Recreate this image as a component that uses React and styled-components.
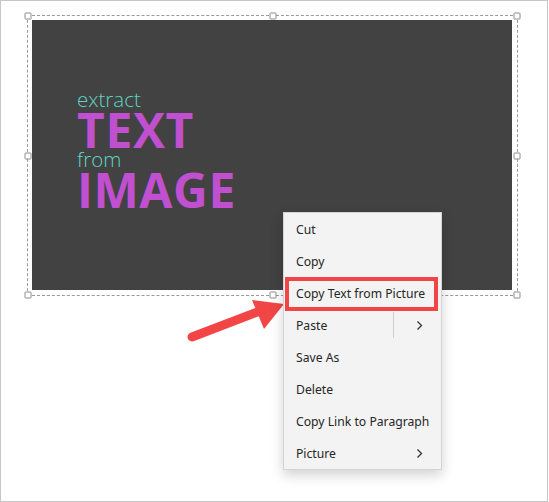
import styled, { createGlobalStyle } from "styled-components";

const GlobalStyle = createGlobalStyle`
    html, body {
        margin: 0;
        padding: 0;
        background: #ffffff;
    }
`;

const RED = "#f24646";

const Frame = styled.div`
    position: relative;
    width: 548px;
    height: 502px;
    box-sizing: border-box;
    border: 1px solid #c6c6c6;
    padding: 14px 0 0 26px;
    background: #ffffff;
`;

const Selection = styled.div`
    position: relative;
    width: 491px;
    height: 281px;
    box-sizing: border-box;
    border: 1px dashed #9a9a9a;
    padding: 4px;
`;

const Handle = styled.span`
    position: absolute;
    width: 5px;
    height: 5px;
    border: 1px solid #8c8c8c;
    border-radius: 1px;
    background: #ffffff;
    left: ${(p) => p.$x};
    top: ${(p) => p.$y};
    transform: translate(-50%, -50%);
`;

const Picture = styled.div`
    width: 480px;
    height: 270px;
    background: #424242;
    box-sizing: border-box;
    padding: 69px 0 0 45px;
    display: flex;
    flex-direction: column;
    align-items: flex-start;
    font-family: "Open Sans", "Noto Sans", sans-serif;
`;

const SmallWord = styled.span`
    font-size: 20.5px;
    font-weight: 300;
    color: #5fd4c4;
    line-height: ${(p) => p.$lh}px;
`;

const BigWord = styled.span`
    font-size: 48px;
    font-weight: 700;
    color: #c050d0;
    line-height: 41px;
    letter-spacing: 0.6px;
`;

const Menu = styled.div`
    position: absolute;
    left: 282px;
    top: 211px;
    width: 159px;
    box-sizing: border-box;
    background: #f3f3f3;
    border: 1px solid #d4d4d4;
    box-shadow: 0 5px 12px rgba(0, 0, 0, 0.18);
    font-family: "Noto Sans", "Open Sans", sans-serif;
    font-size: 12.2px;
    color: #262626;
`;

const Item = styled.div`
    position: relative;
    height: 32px;
    display: flex;
    align-items: center;
    padding: 0 18px 0 12px;

    &::after {
        content: "";
        display: ${(p) => (p.$marked ? "block" : "none")};
        position: absolute;
        left: 1px;
        right: 3px;
        top: 0;
        bottom: -2px;
        border: 4px solid ${RED};
    }
`;

const Label = styled.span`
    flex: 1;
    white-space: nowrap;
`;

const Divider = styled.span`
    width: 1px;
    height: 26px;
    background: #cfcfcf;
    margin-right: 22px;
`;

const Chevron = () => (
    <svg width="7" height="11" viewBox="0 0 7 11">
        <path d="M1.5 1.5 L5.5 5.5 L1.5 9.5" fill="none" stroke="#333" strokeWidth="1.3" />
    </svg>
);

const Arrow = styled.svg`
    position: absolute;
    left: 179px;
    top: 289px;
`;

const items = [
    { label: "Cut" },
    { label: "Copy" },
    { label: "Copy Text from Picture", marked: true },
    { label: "Paste", split: true, more: true },
    { label: "Save As" },
    { label: "Delete" },
    { label: "Copy Link to Paragraph" },
    { label: "Picture", more: true },
];

const handles = [
    ["0%", "0%"],
    ["50%", "0%"],
    ["100%", "0%"],
    ["0%", "50%"],
    ["100%", "50%"],
    ["0%", "100%"],
    ["50%", "100%"],
    ["100%", "100%"],
];

export default function App() {
    return (
        <>
            <GlobalStyle />
            <Frame>
                <Selection>
                    <Picture>
                        <SmallWord $lh={20}>extract</SmallWord>
                        <BigWord>TEXT</BigWord>
                        <SmallWord $lh={19}>from</SmallWord>
                        <BigWord>IMAGE</BigWord>
                    </Picture>
                    {handles.map(([x, y]) => (
                        <Handle key={x + y} $x={x} $y={y} />
                    ))}
                </Selection>

                <Arrow width="110" height="60" viewBox="0 0 110 60">
                    <line x1="12" y1="47" x2="80" y2="21" stroke={RED} strokeWidth="9" strokeLinecap="round" />
                    <polygon points="104,14 72,10 84,39" fill={RED} />
                </Arrow>

                <Menu>
                    {items.map((it) => (
                        <Item key={it.label} $marked={it.marked}>
                            <Label>{it.label}</Label>
                            {it.split && <Divider />}
                            {it.more && <Chevron />}
                        </Item>
                    ))}
                </Menu>
            </Frame>
        </>
    );
}
